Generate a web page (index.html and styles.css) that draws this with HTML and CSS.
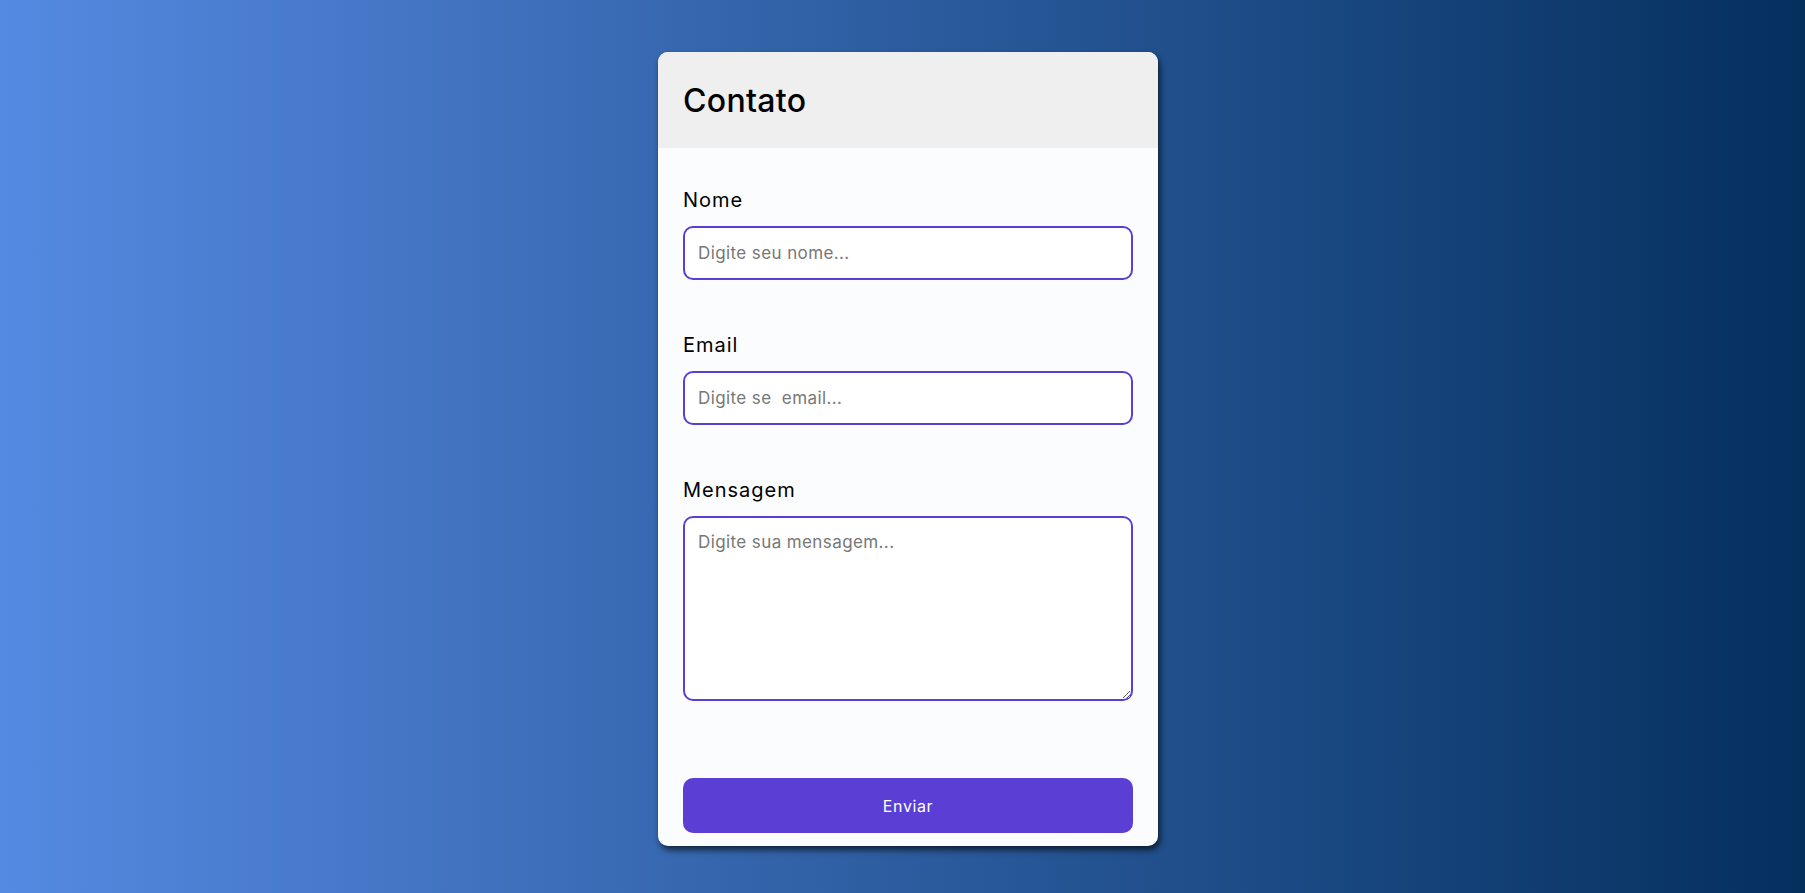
FILE: index.html
```html
<!DOCTYPE html>
<html lang="pt-BR">
<head>
<meta charset="UTF-8">
<title>Contato</title>
<link rel="stylesheet" href="styles.css">
</head>
<body>
  <main class="page">
    <section class="card">
      <header class="card-header">
        <h1 class="card-title">Contato</h1>
      </header>
      <form class="card-form">
        <div class="field">
          <label class="field-label" for="nome">Nome</label>
          <input class="field-input" id="nome" type="text" placeholder="Digite seu nome...">
        </div>
        <div class="field">
          <label class="field-label" for="email">Email</label>
          <input class="field-input" id="email" type="email" placeholder="Digite se  email...">
        </div>
        <div class="field">
          <label class="field-label" for="mensagem">Mensagem</label>
          <textarea class="field-input field-textarea" id="mensagem" placeholder="Digite sua mensagem..."></textarea>
        </div>
        <button class="submit" type="button">Enviar</button>
      </form>
    </section>
  </main>
</body>
</html>
```

FILE: styles.css
```css
* {
  box-sizing: border-box;
}

html, body {
  margin: 0;
  height: 100%;
}

body {
  font-family: "Inter", "Noto Sans", sans-serif;
  background: linear-gradient(to right, #558ae2, #042f5d);
}

.page {
  height: 100%;
  display: flex;
  justify-content: center;
  padding: 52px 0 0 11px;
}

.card {
  width: 500px;
  height: 794px;
  background: #fbfcfe;
  border-radius: 10px;
  overflow: hidden;
  box-shadow: 2px 4px 6px rgba(0, 0, 0, 0.65);
  display: flex;
  flex-direction: column;
}

.card-header {
  height: 96px;
  flex: none;
  background: #efefef;
  display: flex;
  align-items: center;
  padding: 0 25px;
}

.card-title {
  margin: 0;
  font-size: 32px;
  font-weight: 500;
  color: #000;
  letter-spacing: 0.3px;
}

.card-form {
  flex: 1;
  display: flex;
  flex-direction: column;
  padding: 38px 25px 13px;
}

.field {
  display: flex;
  flex-direction: column;
  gap: 12px;
  margin-bottom: 51px;
}

.field-label {
  font-size: 20px;
  line-height: 28px;
  letter-spacing: 1px;
  color: #000;
}

.field-input {
  height: 54px;
  border: 2px solid #5b3fd4;
  border-radius: 10px;
  background: #fff;
  padding: 0 13px;
  font-family: inherit;
  font-size: 17px;
  letter-spacing: 0.4px;
  color: #222;
  outline: none;
}

.field-input::placeholder {
  color: #777;
}

.field-textarea {
  height: 185px;
  padding: 14px 13px;
  resize: vertical;
}

.field:last-of-type {
  margin-bottom: 0;
}

.submit {
  margin-top: auto;
  height: 55px;
  border: none;
  border-radius: 10px;
  background: #5b3fd4;
  color: #fff;
  font-family: inherit;
  font-size: 16px;
  letter-spacing: 0.6px;
}
```
